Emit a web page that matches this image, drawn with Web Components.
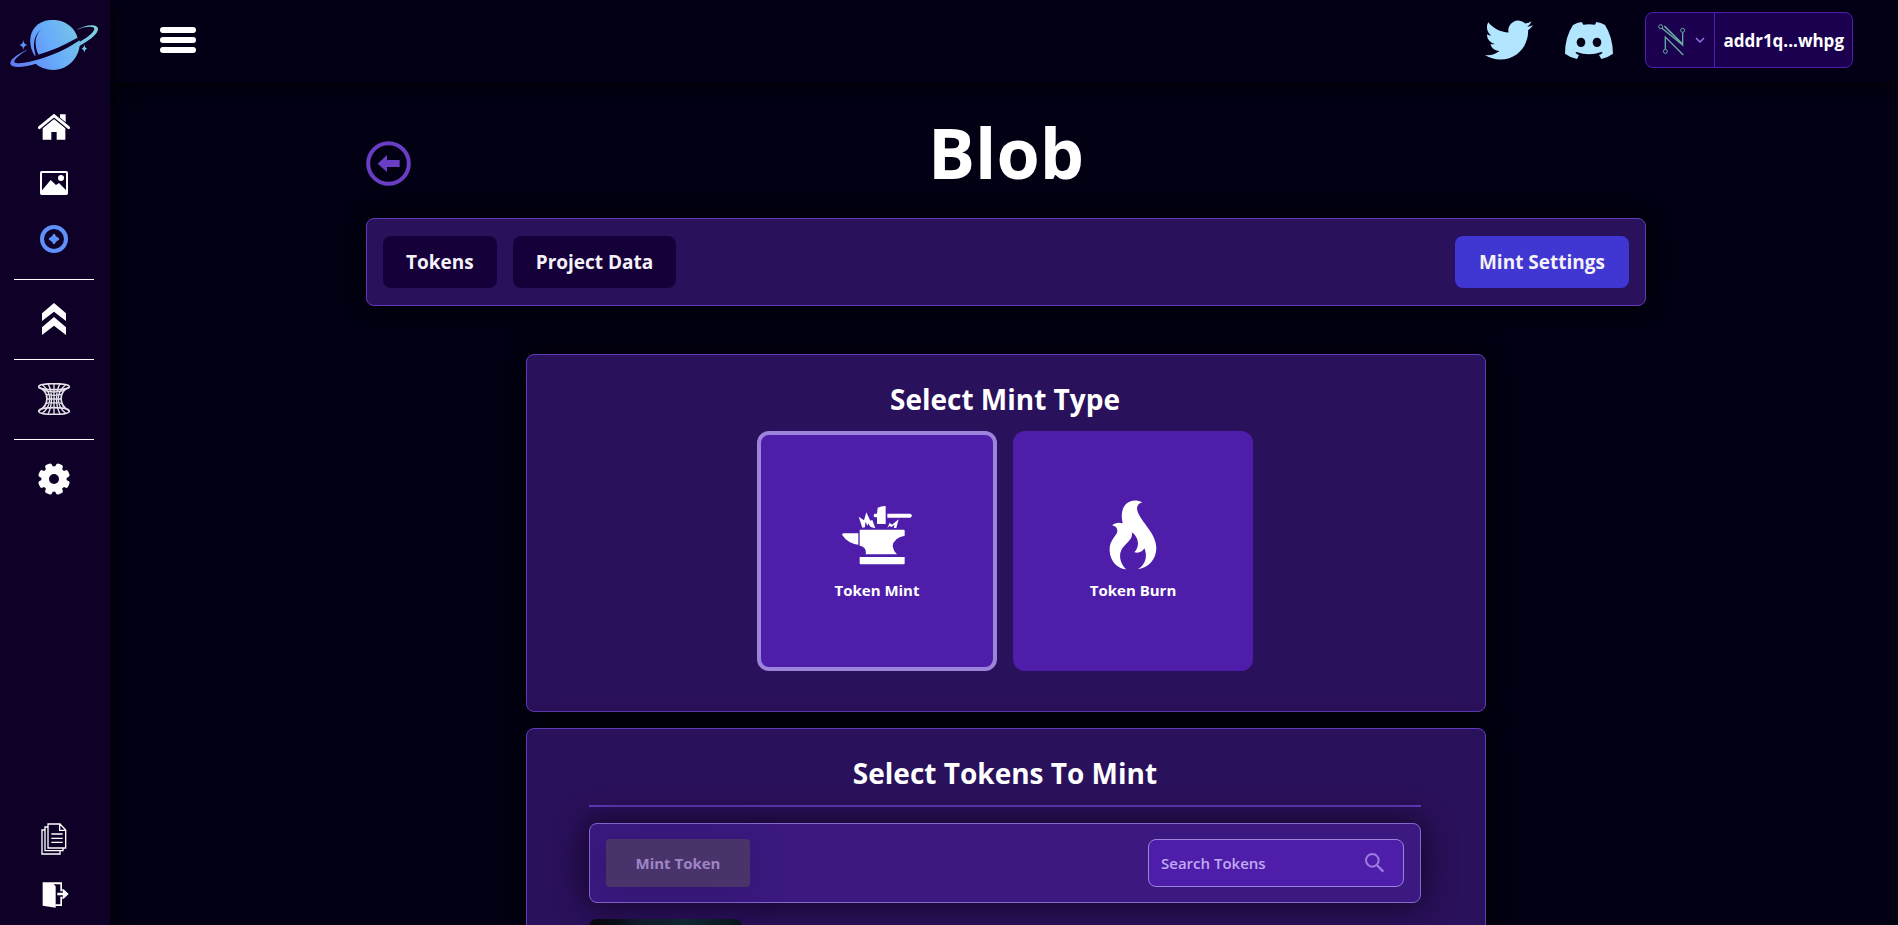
<!DOCTYPE html>
<html lang="en">
<head>
<meta charset="utf-8">
<meta name="viewport" content="width=device-width, initial-scale=1">
<title>Blob - Mint Settings</title>
<style>
  html, body { margin: 0; height: 100%; background: #020013; }
  body {
    color: #fff;
    font-family: "Segoe UI", "Open Sans", "Noto Sans", sans-serif;
    --panel: #2a115b;
    --line: #6239bd;
    --accent: #4e1eaa;
    --soft: #9c84db;
  }
</style>
</head>
<body>
<app-shell>
  <side-nav slot="nav"></side-nav>
  <top-bar slot="top"></top-bar>
  <page-title>Blob</page-title>
  <tab-bar></tab-bar>
  <mint-panel heading="Select Mint Type">
    <mint-types></mint-types>
  </mint-panel>
  <mint-panel heading="Select Tokens To Mint">
    <token-picker></token-picker>
  </mint-panel>
</app-shell>

<script>
const define = (name, html) => {
  const template = document.createElement('template');
  template.innerHTML = '<style>:host,*{box-sizing:border-box}button,input{font:inherit;color:inherit;border:0;margin:0;padding:0}button{cursor:pointer}svg{display:block}</style>' + html;
  customElements.define(name, class extends HTMLElement {
    constructor() {
      super();
      this.attachShadow({ mode: 'open' }).append(template.content.cloneNode(true));
    }
    connectedCallback() {
      const h = this.shadowRoot.querySelector('[data-heading]');
      if (h) h.textContent = this.getAttribute('heading');
    }
  });
};

define('app-shell', `
<style>
  :host { display: grid; grid-template: auto 1fr / auto 1fr; height: 100vh; overflow: hidden; }
  aside { grid-row: 1 / 3; z-index: 3; }
  header { z-index: 2; }
  main { min-height: 0; overflow-y: auto; scrollbar-width: none; display: flex; flex-direction: column; align-items: center; gap: 16px; padding: 24px 0 64px 4px; }
</style>
<aside><slot name="nav"></slot></aside>
<header><slot name="top"></slot></header>
<main><slot></slot></main>`);

define('side-nav', `
<style>
  :host { display: block; height: 100%; width: 110px; background: #0e0026; box-shadow: 0 0 16px #000; }
  nav { height: 100%; display: flex; flex-direction: column; align-items: center; gap: 24px; padding: 20px 2px 14px 0; }
  a { display: block; color: #fff; }
  .icon svg { width: 32px; height: 32px; fill: currentColor; }
  .logo svg { width: 88px; height: 50px; }
  .logo { margin-bottom: 17px; }
  hr { width: 80px; height: 1px; border: 0; margin: 0 0 -1px; background: #fff; flex: none; }
  .active { color: #6090fc; }
  .push { margin-top: auto; }
</style>
<nav aria-label="Main">
  <a class="logo" href="#" aria-label="Dashboard"><svg viewBox="30 60 264 150">
    <defs><linearGradient id="g" gradientUnits="userSpaceOnUse" x1="30" y1="190" x2="294" y2="80"><stop offset="0" stop-color="#5f78f2"/><stop offset=".45" stop-color="#66aafb"/><stop offset="1" stop-color="#7fd4dc"/></linearGradient></defs>
    <g fill="url(#g)">
      <path d="M104 167C78 128 88 66 150 60C194 56 226 84 233 115Q172 150 104 167Z"/>
      <path d="M104 189Q176 163 239 121C244 166 208 210 160 210Q127 210 104 189Z"/>
      <path d="M84 149C60 157 27 178 31 192C36 207 80 200 108 191C180 170 292 120 294 88C295 70 257 73 229 90C252 80 283 76 283 87C281 106 220 139 160 163C115 181 52 197 44 187C38 181 60 162 84 149Z"/>
      <path d="M70 120Q71 133 83 135Q71 137 70 150Q69 137 57 135Q69 133 70 120ZM253 133Q254 145 262 146Q254 147 253 159Q252 147 244 146Q252 145 253 133Z"/>
    </g>
    <path d="M124 87Q94 118 116 166L107 167Q91 115 124 87Z" fill="#100332"/>
    <path d="M104 171Q174 149 232 115Q178 150 104 171Z" fill="#100332" stroke="#100332" stroke-width="2"/>
  </svg></a>
  <a class="icon" href="#home" aria-label="Home"><svg viewBox="114 333 96 96"><path d="M180 343h17v36l-17-14zM162 357l34 28v34h-26v-23h-16v23h-26v-34z"/><path d="M118 383l44-36 44 36" fill="none" stroke="#0e0026" stroke-width="14"/><path d="M118 383l44-36 44 36" fill="none" stroke="#fff" stroke-width="9" stroke-linecap="round"/></svg></a>
  <a class="icon" href="#gallery" aria-label="Gallery"><svg viewBox="114 501 96 96"><rect x="123" y="516" width="78" height="66" rx="2" fill="none" stroke="#fff" stroke-width="6"/><circle cx="183" cy="534" r="9"/><path d="M125 572l27-32 16 15 9-6 23 23v12h-75z"/></svg></a>
  <a class="icon active" href="#tokens" aria-label="Tokens" aria-current="page"><svg viewBox="114 669 96 96"><circle cx="162" cy="717" r="36" fill="none" stroke="currentColor" stroke-width="12"/><path d="M162 701q3 0 5 6l5 5q6 2 6 5t-6 5l-5 5q-2 6-5 6t-5-6l-5-5q-6-2-6-5t6-5l5-5q2-6 5-6z"/></svg></a>
  <hr>
  <a class="icon" href="#upgrade" aria-label="Upgrade"><svg viewBox="114 99 96 96"><path d="M162 99l36 31v23l-36-28-36 28v-23zM162 141l36 31v23l-36-28-36 28v-23z"/></svg></a>
  <hr>
  <a class="icon" href="#wormhole" aria-label="Wormhole"><svg viewBox="114 339 96 96"><g fill="none" stroke="#e6e2ea" stroke-width="4"><ellipse cx="162" cy="350" rx="46" ry="9" stroke-width="5"/><path d="M116 424C118 436 206 436 208 424C208 415 186 413 162 413S116 415 116 424Z" stroke-width="5"/><path d="M116 352C150 365 148 408 116 422M208 352C174 365 176 408 208 422" stroke-width="5"/><path d="M127 344C156 367 157 405 127 430M144 341C158 367 158 405 144 432M197 344C168 367 167 405 197 430M180 341C166 367 166 405 180 432M162 341V433M133 362Q162 370 191 362M139 373Q162 379 185 373M141 387H183M139 400Q162 396 185 400"/></g></svg></a>
  <hr>
  <a class="icon" href="#settings" aria-label="Settings"><svg viewBox="-48 -48 96 96"><g transform="rotate(22.5)"><rect x="-11" y="-48" width="22" height="96" rx="7"/><rect x="-48" y="-11" width="96" height="22" rx="7"/><g transform="rotate(45)"><rect x="-11" y="-48" width="22" height="96" rx="7"/><rect x="-48" y="-11" width="96" height="22" rx="7"/></g></g><circle r="38"/><circle r="15" fill="#0e0026"/></svg></a>
  <a class="icon push" href="#docs" aria-label="Documents"><svg viewBox="114 129 96 96"><g fill="none" stroke="#fff" stroke-width="4"><path d="M144 132h36l17 18v54h-53zM179 133v18h18M142 141h-7v71h54v-7M133 150h-7v72h54v-8"/><path d="M154 162h34M154 175h34M154 187h34"/></g></svg></a>
  <a class="icon" href="#logout" aria-label="Log out"><svg viewBox="114 297 96 96"><path d="M128 307h58v27h-5v-21h-20l6 6v64l-39-6z"/><path d="M181 350h5v28h-20v-5h15zM172 338h17l-3-10h5l15 14-15 14h-5l3-10h-17z"/></svg></a>
</nav>`);

define('top-bar', `
<style>
  :host { display: flex; align-items: center; height: 82px; padding: 0 45px 2px 50px; background: #030016; box-shadow: 0 0 16px #000; }
  .menu { display: grid; gap: 4px; width: 36px; background: none; }
  .menu i { height: 6px; border-radius: 3px; background: #fff; }
  .links { margin-left: auto; display: flex; align-items: center; gap: 32px; color: #b2e5fe; }
  a { color: inherit; }
  svg { fill: currentColor; }
  .wallet { display: flex; height: 56px; border: 1px solid #501dae; border-radius: 8px; background: #1b0050; color: #fff; overflow: hidden; }
  .wallet button { background: none; }
  .pick { display: flex; align-items: center; gap: 8px; width: 69px; padding: 0 9px 0 11px; border-right: 1px solid #501dae; }
  .wallet .addr { padding: 0 8px; font-size: 17px; font-weight: 700; }
</style>
<button class="menu" aria-label="Toggle menu"><i></i><i></i><i></i></button>
<div class="links">
  <a href="#twitter" aria-label="Twitter"><svg width="48" height="40" viewBox="0 2 24 20"><path d="M23.95 4.57a10 10 0 01-2.82.775 4.96 4.96 0 002.16-2.723c-.95.555-2 .959-3.13 1.184a4.92 4.92 0 00-8.38 4.482C7.69 8.095 4.07 6.13 1.64 3.162a4.82 4.82 0 00-.67 2.475c0 1.71.87 3.213 2.19 4.096a4.9 4.9 0 01-2.23-.616v.06a4.92 4.92 0 003.95 4.827 5 5 0 01-2.21.085 4.94 4.94 0 004.6 3.417 9.87 9.87 0 01-6.1 2.105c-.39 0-.78-.023-1.17-.067a14 14 0 007.56 2.209c9.05 0 14-7.496 14-13.985 0-.21 0-.42-.02-.63A9.94 9.94 0 0024 4.59z"/></svg></a>
  <a href="#discord" aria-label="Discord"><svg width="48" height="37" viewBox="0 0 144 111"><path fill-rule="evenodd" d="M50 0l5 8Q72 5 90 8l4-8q14 2 26 9 23 36 24 86-16 12-35 16l-7-12q6-2 11-7l-4-2q-37 14-74 0l-4 2q5 5 11 7l-6 12Q16 107 0 95 0 45 24 9 36 2 50 0zM48 47a13 14 0 100 28 13 14 0 000-28zM96 47a13 14 0 100 28 13 14 0 000-28z"/></svg></a>
  <div class="wallet">
    <button class="pick" aria-label="Choose wallet">
      <svg width="30" height="34" viewBox="590 68 90 102"><g fill="none" stroke="#67aaa0" stroke-width="4"><circle cx="601" cy="79" r="6" stroke-width="3"/><circle cx="667" cy="90" r="6" stroke-width="3"/><circle cx="615" cy="153" r="6" stroke-width="3"/><path d="M615 146v-36l54 54M605 84l62 50V97"/><path d="M612 77l53 53" stroke-width="5"/></g></svg>
      <svg width="10" height="7" viewBox="0 0 10 7"><path d="M1 1l4 4 4-4" fill="none" stroke="#9c70e0" stroke-width="1.5"/></svg>
    </button>
    <button class="addr">addr1q...whpg</button>
  </div>
</div>`);

define('page-title', `
<style>
  :host { display: grid; grid-template-columns: 45px 1fr 45px; align-items: start; width: 1280px; max-width: 94%; min-height: 96px; flex: none; }
  button { width: 45px; height: 45px; background: none; margin-top: 35px; }
  h1 { margin: 0; font-size: 70px; line-height: 92px; font-weight: 700; text-align: center; }
</style>
<button aria-label="Back"><svg viewBox="0 0 135 135" fill="#693ec4"><circle cx="67.500" cy="67.500" r="61" fill="none" stroke="#693ec4" stroke-width="12"/><path d="M35 68l28-26v15h38v21H63v15z"/></svg></button>
<h1><slot></slot></h1>`);

define('tab-bar', `
<style>
  :host { display: flex; gap: 16px; align-items: center; width: 1280px; max-width: 94%; height: 88px; padding: 0 16px; border: 1px solid var(--line); border-radius: 8px; background: var(--panel); box-shadow: 0 0 24px #000; margin-bottom: 32px; flex: none; }
  button { height: 52px; padding: 0 23px; border-radius: 8px; background: #16003a; color: #f4f2f6; font-size: 19px; font-weight: 700; }
  .primary { margin-left: auto; padding: 0 24px; background: #4036d2; }
</style>
<button>Tokens</button><button>Project Data</button><button class="primary">Mint Settings</button>`);

define('mint-panel', `
<style>
  :host { display: block; width: 960px; max-width: 94%; padding: 20px 64px 40px 62px; border: 1px solid var(--line); border-radius: 8px; background: var(--panel); box-shadow: 0 0 24px #000; flex: none; }
  h2 { margin: 0; font-size: 28px; line-height: 48px; font-weight: 700; text-align: center; }
</style>
<h2 data-heading></h2>
<slot></slot>`);

define('mint-types', `
<style>
  :host { display: flex; justify-content: center; flex-wrap: wrap; gap: 16px; padding-top: 8px; }
  button { display: flex; flex-direction: column; align-items: center; justify-content: center; gap: 8px; width: 240px; height: 240px; border: 4px solid var(--accent); border-radius: 12px; background: var(--accent); font-size: 15px; line-height: 24px; font-weight: 700; }
  .on { border-color: var(--soft); }
  svg { width: 70px; height: 70px; fill: #fff; }
</style>
<button class="on" aria-pressed="true"><svg viewBox="66 60 210 210"><path d="M173 83q9-4 24-5v54h-26v-20h-7q-6-6 0-11h7zM202 101h69q10 5 0 12h-69zM119 151q0-2 3-2h129q3 0 3 2v16q-34 6-36 32 2 14 13 24h-94q4-22-18-26zM69 160h46v34q-32-4-49-30zM119 231h135v19q0 3-3 3H122q-3 0-3-3z"/><path d="M116 110l16 11 7-24 12 25 6-2 9 25-14-4-8-11-1 8-7-12-1 16-8 1zM202 145l7-17 7 6 20-16-7 26h-7l1-10-8 7-7-3z"/></svg>Token Mint</button>
<button aria-pressed="false"><svg viewBox="54 60 210 210"><path d="M187 67C151 49 115 75 128 130Q108 124 96 136C110 138 116 150 109 162C96 181 88 190 89 213C90 245 116 268 139 268C121 253 109 218 136 194C156 177 158 164 155 157C174 169 182 196 163 217Q183 222 193 205C205 232 193 255 174 268C207 263 228 238 229 205C229 154 172 119 171 84Q173 70 187 67Z"/></svg>Token Burn</button>`);

define('token-picker', `
<style>
  :host { display: block; margin-top: 8px; }
  hr { height: 2px; margin: 0 0 16px; border: 0; background: var(--line); }
  .bar { display: flex; flex-wrap: wrap; justify-content: space-between; align-items: center; gap: 16px; min-height: 80px; padding: 0 16px; border: 1px solid #8667d2; border-radius: 8px; background: #3b1980; box-shadow: 0 0 32px #10051c; }
  .mint { width: 144px; height: 48px; border-radius: 4px; background: #48346a; color: #9f84c6; font-size: 15px; font-weight: 700; box-shadow: 0 4px 32px #2c126088; }
  .search { display: flex; align-items: center; width: 256px; height: 48px; padding: 0 16px 0 12px; border: 1px solid var(--soft); border-radius: 8px; background: var(--accent); }
  input { flex: 1; min-width: 0; background: none; outline: 0; font-size: 15px; font-weight: 600; }
  input::placeholder { color: #c2a9f3; opacity: 1; }
  svg { width: 24px; height: 24px; }
  .grid { display: flex; gap: 16px; margin-top: 16px; }
  .token { width: 153px; height: 200px; border-radius: 8px; background: radial-gradient(circle at 62% 2%, #102834, transparent 40%), radial-gradient(circle at 37% 2%, #16102a, transparent 12%), #08080f; }
</style>
<hr>
<div class="bar">
  <button class="mint" disabled>Mint Token</button>
  <label class="search"><input type="search" placeholder="Search Tokens" aria-label="Search Tokens"><svg viewBox="0 0 72 72" fill="none" stroke="#9b7bdb" stroke-width="6"><circle cx="28" cy="28" r="19"/><path d="M41 42l20 20" stroke-width="7"/></svg></label>
</div>
<div class="grid"><div class="token"></div></div>`);
</script>
</body>
</html>
